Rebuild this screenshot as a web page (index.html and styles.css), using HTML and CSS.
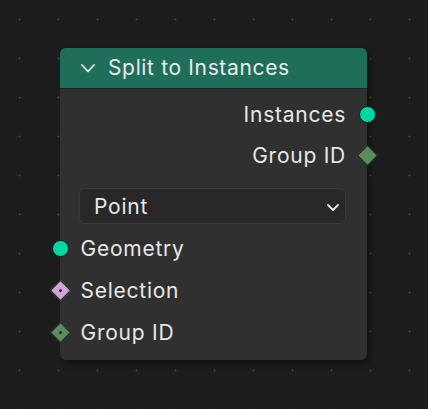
FILE: index.html
```html
<!DOCTYPE html>
<html>
<head>
<meta charset="utf-8">
<link rel="stylesheet" href="styles.css">
</head>
<body>
<div class="canvas">
  <div class="node">
    <div class="header">
      <svg class="hchev" width="14" height="9" viewBox="0 0 14 9"><path d="M1 1 L7 7.5 L13 1" fill="none" stroke="#e6ece9" stroke-width="1.8" stroke-linecap="round" stroke-linejoin="round"/></svg>
      <span class="title">Split to Instances</span>
    </div>
    <div class="content">
      <div class="row out r1">
        <span class="label">Instances</span>
        <span class="sock circle geo out-sock"></span>
      </div>
      <div class="row out r2">
        <span class="label">Group ID</span>
        <span class="sock diamond int out-sock"></span>
      </div>
      <div class="dropdown">
        <span class="dd-text">Point</span>
        <svg class="ddchev" width="12" height="7" viewBox="0 0 12 7"><path d="M1 1 L6 6 L11 1" fill="none" stroke="#e6e6e6" stroke-width="1.8" stroke-linecap="round" stroke-linejoin="round"/></svg>
      </div>
      <div class="row in">
        <span class="sock circle geo in-sock"></span>
        <span class="label">Geometry</span>
      </div>
      <div class="row in">
        <span class="sock diamond bool in-sock"><i class="dot"></i></span>
        <span class="label">Selection</span>
      </div>
      <div class="row in">
        <span class="sock diamond int in-sock"><i class="dot"></i></span>
        <span class="label">Group ID</span>
      </div>
    </div>
  </div>
</div>
</body>
</html>
```
FILE: styles.css
```css
html, body {
  margin: 0;
  padding: 0;
  width: 428px;
  height: 409px;
  overflow: hidden;
}
body {
  background-color: #1d1d1d;
  background-image: radial-gradient(circle at center, #4a4a4a 0, #3a3a3a 0.8px, transparent 1.4px);
  background-size: 39px 39px;
  background-position: 0 0;
  font-family: Inter, "Noto Sans", sans-serif;
  color: #e8e8e8;
}
.canvas {
  padding: 48px 0 0 60px;
}
.node {
  width: 307px;
  height: 312px;
  background: #303030;
  border-radius: 6px;
  box-shadow: 3px 4px 6px rgba(0,0,0,0.45);
  display: flex;
  flex-direction: column;
}
.header {
  background: #1f6e5a;
  border-radius: 6px 6px 0 0;
  border-bottom: 1px solid #1c2422;
  display: flex;
  align-items: center;
  padding-left: 21px;
  box-sizing: border-box;
  height: 41px;
}
.hchev {
  margin-right: 13px;
  margin-top: 0;
}
.title {
  font-size: 21px;
  color: #e8ecea;
  letter-spacing: 0.65px;
  margin-top: -1px;
}
.content {
  padding: 5px 21px 0 20px;
  display: flex;
  flex-direction: column;
}
.row {
  position: relative;
  display: flex;
  align-items: center;
  font-size: 21px;
  letter-spacing: 0.75px;
}
.row.out {
  height: 41px;
  justify-content: flex-end;
}
.row.in {
  height: 42px;
}
.row.in .label {
  margin-left: 0.5px;
}
.dropdown {
  margin-top: 12px;
  margin-bottom: 3px;
  height: 36px;
  box-sizing: border-box;
  border: 1px solid #3b3b3b;
  background: #282828;
  border-radius: 6px;
  margin-left: -1px;
  display: flex;
  align-items: center;
  justify-content: space-between;
  padding: 0 6px 0 14px;
  font-size: 21px;
  letter-spacing: 0.75px;
}
.ddchev {
  margin-top: 2px;
}
.sock {
  position: absolute;
  top: 50%;
  box-sizing: border-box;
}
.circle {
  width: 17px;
  height: 17px;
  border-radius: 50%;
  border: 1.5px solid #1a1a1a;
  margin-top: -8.5px;
}
.geo { background: #00d6a3; }
.int { background: #5a8c5e; }
.bool { background: #cca6d6; }
.diamond {
  width: 15px;
  height: 15px;
  border: 1.5px solid #1e1e1e;
  transform: rotate(45deg);
  margin-top: -7.5px;
  display: flex;
  align-items: center;
  justify-content: center;
}
.dot {
  width: 3.5px;
  height: 3.5px;
  border-radius: 50%;
  background: #1e1e1e;
}
.out-sock.circle { right: -29.5px; }
.out-sock.diamond { right: -28.5px; }
.in-sock.circle { left: -28.5px; }
.in-sock.diamond { left: -27.5px; }
```
